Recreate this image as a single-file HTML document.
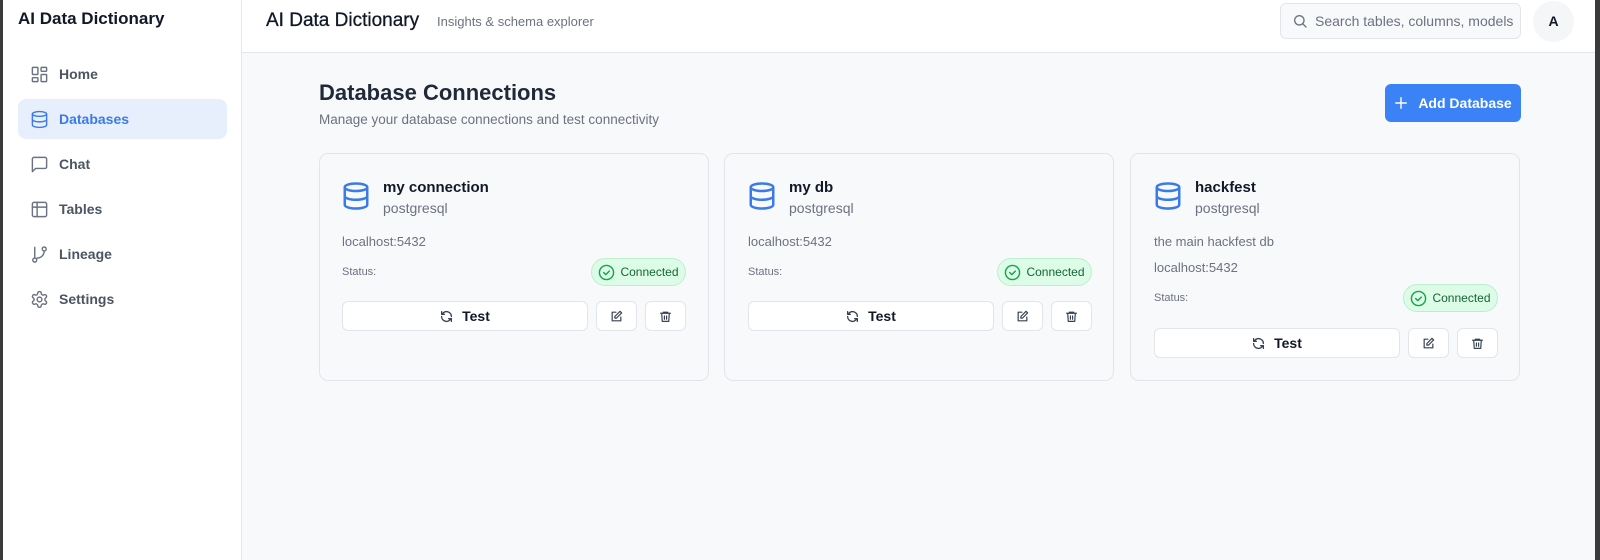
<!DOCTYPE html>
<html><head><meta charset="utf-8"><style>
*{box-sizing:border-box;margin:0;padding:0}
body{width:1600px;height:560px;overflow:hidden;background:#f8f9fb;font-family:"Liberation Sans",sans-serif;position:relative;color:#111827}
.a{position:absolute}
.lb{left:0;top:0;width:3px;height:560px;background:#3a3a3a}
.rb{right:0;top:0;width:5px;height:560px;background:#3a3a3a}
.side{left:3px;top:0;width:239px;height:560px;background:#fff;border-right:1px solid #e5e7eb}
.hdr{left:242px;top:0;width:1353px;height:53px;background:#fff;border-bottom:1px solid #e5e7eb}
.nav{left:18px;width:209px;height:40px;border-radius:8px;display:flex;align-items:center;padding-left:12px;font-size:14px;font-weight:bold;color:#4b5563}
.nav svg{width:19px;height:19px;margin-right:10px;fill:none;stroke:#6b7280;stroke-width:1.8;stroke-linecap:round;stroke-linejoin:round}
.nav.on{background:#e8effc;color:#3b7be8}.nav.on svg{stroke:#3b7be8}
.card{width:390px;height:228px;border:1px solid #e2e5ea;border-radius:9px;background:#f8f9fb}
.t{font-size:13px;color:#6b7280}
.btn{background:#fff;border:1px solid #e2e5ea;border-radius:6px;height:30px;display:flex;align-items:center;justify-content:center;font-size:14px;font-weight:bold;color:#111827}
.badge{background:#dcfce7;border:1px solid #bbf0cc;border-radius:14px;height:28px;display:flex;align-items:center;justify-content:center;font-size:12px;color:#166534}
svg.i{fill:none;stroke-linecap:round;stroke-linejoin:round}
</style></head><body>
<div class="a lb"></div><div class="a rb"></div>
<div class="a side"></div>
<div class="a" style="left:18px;top:9px;font-size:17px;font-weight:bold;color:#111827">AI Data Dictionary</div>

<div class="a nav" style="top:54px"><svg viewBox="0 0 24 24"><rect x="3" y="3" width="7" height="9" rx="1"/><rect x="14" y="3" width="7" height="5" rx="1"/><rect x="14" y="12" width="7" height="9" rx="1"/><rect x="3" y="16" width="7" height="5" rx="1"/></svg>Home</div>
<div class="a nav on" style="top:99px"><svg viewBox="0 0 24 24"><ellipse cx="12" cy="5" rx="9" ry="3"/><path d="M3 5v14a9 3 0 0 0 18 0V5"/><path d="M3 12a9 3 0 0 0 18 0"/></svg>Databases</div>
<div class="a nav" style="top:144px"><svg viewBox="0 0 24 24"><path d="M21 15a2 2 0 0 1-2 2H7l-4 4V5a2 2 0 0 1 2-2h14a2 2 0 0 1 2 2z"/></svg>Chat</div>
<div class="a nav" style="top:189px"><svg viewBox="0 0 24 24"><rect x="3" y="3" width="18" height="18" rx="2"/><path d="M3 9h18M9 3v18"/></svg>Tables</div>
<div class="a nav" style="top:234px"><svg viewBox="0 0 24 24"><circle cx="6" cy="19" r="2.5"/><circle cx="18" cy="5" r="2.5"/><path d="M6 3v13.5M18 7.5a9 9 0 0 1-9 9"/></svg>Lineage</div>
<div class="a nav" style="top:279px"><svg viewBox="0 0 24 24"><circle cx="12" cy="12" r="3"/><path d="M12.2 2h-.4a2 2 0 0 0-2 2v.2a2 2 0 0 1-1 1.7l-.4.3a2 2 0 0 1-2 0l-.2-.1a2 2 0 0 0-2.7.7l-.2.4a2 2 0 0 0 .7 2.7l.2.1a2 2 0 0 1 1 1.7v.5a2 2 0 0 1-1 1.7l-.2.1a2 2 0 0 0-.7 2.7l.2.4a2 2 0 0 0 2.7.7l.2-.1a2 2 0 0 1 2 0l.4.3a2 2 0 0 1 1 1.7v.2a2 2 0 0 0 2 2h.4a2 2 0 0 0 2-2v-.2a2 2 0 0 1 1-1.7l.4-.3a2 2 0 0 1 2 0l.2.1a2 2 0 0 0 2.7-.7l.2-.4a2 2 0 0 0-.7-2.7l-.2-.1a2 2 0 0 1-1-1.7v-.5a2 2 0 0 1 1-1.7l.2-.1a2 2 0 0 0 .7-2.7l-.2-.4a2 2 0 0 0-2.7-.7l-.2.1a2 2 0 0 1-2 0l-.4-.3a2 2 0 0 1-1-1.7V4a2 2 0 0 0-2-2z"/></svg>Settings</div>

<div class="a hdr"></div>
<div class="a" style="left:266px;top:10px;font-size:19px;color:#111827;-webkit-text-stroke:0.3px #111827">AI Data Dictionary</div>
<div class="a" style="left:437px;top:14px;font-size:13px;color:#6b7280">Insights &amp; schema explorer</div>
<div class="a" style="left:1280px;top:3px;width:241px;height:36px;border:1px solid #e2e5ea;border-radius:6px;background:#f8f9fb"></div>
<svg class="a i" style="left:1292px;top:13px" width="16" height="16" viewBox="0 0 24 24" stroke="#6b7280" stroke-width="2"><circle cx="11" cy="11" r="7"/><path d="M21 21l-5-5"/></svg>
<div class="a" style="left:1315px;top:13px;font-size:14px;color:#6b7280">Search tables, columns, models</div>
<div class="a" style="left:1533px;top:1px;width:41px;height:41px;border-radius:50%;background:#f5f6f8;text-align:center;line-height:41px;font-size:14px;font-weight:bold">A</div>

<div class="a" style="left:319px;top:80px;font-size:22px;font-weight:bold;color:#1f2937">Database Connections</div>
<div class="a" style="left:319px;top:112px;font-size:13.5px;color:#6b7280">Manage your database connections and test connectivity</div>
<div class="a" style="left:1385px;top:84px;width:136px;height:38px;border-radius:6px;background:#3b82f6;color:#fff;font-size:14px;font-weight:bold;display:flex;align-items:center;justify-content:center"><svg class="i" width="14" height="14" viewBox="0 0 24 24" stroke="#fff" stroke-width="2.4" style="margin-right:10px"><path d="M12 3v18M3 12h18"/></svg>Add Database</div>

<div class="a card" style="left:319px;top:153px"></div>
<div class="a card" style="left:724px;top:153px"></div>
<div class="a card" style="left:1130px;top:153px"></div>

<svg class="a i" style="left:341px;top:181px" width="30" height="30" viewBox="0 0 24 24" stroke="#3b7be8" stroke-width="2"><ellipse cx="12" cy="5" rx="9" ry="3"/><path d="M3 5v14a9 3 0 0 0 18 0V5"/><path d="M3 12a9 3 0 0 0 18 0"/></svg>
<div class="a" style="left:383px;top:179px;font-size:15px;font-weight:bold">my connection</div>
<div class="a t" style="left:383px;top:200px;font-size:14px">postgresql</div>
<div class="a t" style="left:342px;top:234px">localhost:5432</div>
<div class="a t" style="left:342px;top:266px;font-size:11px">Status:</div>
<div class="a badge" style="left:591px;top:258px;width:95px"><svg class="i" width="17" height="17" viewBox="0 0 24 24" stroke="#16a34a" stroke-width="2" style="margin-right:5px"><circle cx="12" cy="12" r="10"/><path d="M8 12l3 3 5-5"/></svg>Connected</div>
<div class="a btn" style="left:342px;top:301px;width:246px"><svg class="i" width="13" height="13" viewBox="0 0 24 24" stroke="#374151" stroke-width="2.4" style="margin-right:9px"><path d="M21 12a9 9 0 0 0-15.5-6.2L3 8M3 3v5h5M3 12a9 9 0 0 0 15.5 6.2L21 16M21 21v-5h-5"/></svg>Test</div>
<div class="a btn" style="left:596px;top:301px;width:41px"><svg class="i" width="13" height="13" viewBox="0 0 24 24" stroke="#374151" stroke-width="2.2"><path d="M11 4H4v16h16v-7"/><path d="M18.5 2.5l3 3L12 15H9v-3z"/></svg></div>
<div class="a btn" style="left:645px;top:301px;width:41px"><svg class="i" width="13" height="13" viewBox="0 0 24 24" stroke="#374151" stroke-width="2.2"><path d="M3 6h18M8 6V4h8v2M5 6l1 15h12l1-15M10 11v6M14 11v6"/></svg></div>

<svg class="a i" style="left:747px;top:181px" width="30" height="30" viewBox="0 0 24 24" stroke="#3b7be8" stroke-width="2"><ellipse cx="12" cy="5" rx="9" ry="3"/><path d="M3 5v14a9 3 0 0 0 18 0V5"/><path d="M3 12a9 3 0 0 0 18 0"/></svg>
<div class="a" style="left:789px;top:179px;font-size:15px;font-weight:bold">my db</div>
<div class="a t" style="left:789px;top:200px;font-size:14px">postgresql</div>
<div class="a t" style="left:748px;top:234px">localhost:5432</div>
<div class="a t" style="left:748px;top:266px;font-size:11px">Status:</div>
<div class="a badge" style="left:997px;top:258px;width:95px"><svg class="i" width="17" height="17" viewBox="0 0 24 24" stroke="#16a34a" stroke-width="2" style="margin-right:5px"><circle cx="12" cy="12" r="10"/><path d="M8 12l3 3 5-5"/></svg>Connected</div>
<div class="a btn" style="left:748px;top:301px;width:246px"><svg class="i" width="13" height="13" viewBox="0 0 24 24" stroke="#374151" stroke-width="2.4" style="margin-right:9px"><path d="M21 12a9 9 0 0 0-15.5-6.2L3 8M3 3v5h5M3 12a9 9 0 0 0 15.5 6.2L21 16M21 21v-5h-5"/></svg>Test</div>
<div class="a btn" style="left:1002px;top:301px;width:41px"><svg class="i" width="13" height="13" viewBox="0 0 24 24" stroke="#374151" stroke-width="2.2"><path d="M11 4H4v16h16v-7"/><path d="M18.5 2.5l3 3L12 15H9v-3z"/></svg></div>
<div class="a btn" style="left:1051px;top:301px;width:41px"><svg class="i" width="13" height="13" viewBox="0 0 24 24" stroke="#374151" stroke-width="2.2"><path d="M3 6h18M8 6V4h8v2M5 6l1 15h12l1-15M10 11v6M14 11v6"/></svg></div>

<svg class="a i" style="left:1153px;top:181px" width="30" height="30" viewBox="0 0 24 24" stroke="#3b7be8" stroke-width="2"><ellipse cx="12" cy="5" rx="9" ry="3"/><path d="M3 5v14a9 3 0 0 0 18 0V5"/><path d="M3 12a9 3 0 0 0 18 0"/></svg>
<div class="a" style="left:1195px;top:179px;font-size:15px;font-weight:bold">hackfest</div>
<div class="a t" style="left:1195px;top:200px;font-size:14px">postgresql</div>
<div class="a t" style="left:1154px;top:234px">the main hackfest db</div>
<div class="a t" style="left:1154px;top:260px">localhost:5432</div>
<div class="a t" style="left:1154px;top:292px;font-size:11px">Status:</div>
<div class="a badge" style="left:1403px;top:284px;width:95px"><svg class="i" width="17" height="17" viewBox="0 0 24 24" stroke="#16a34a" stroke-width="2" style="margin-right:5px"><circle cx="12" cy="12" r="10"/><path d="M8 12l3 3 5-5"/></svg>Connected</div>
<div class="a btn" style="left:1154px;top:328px;width:246px"><svg class="i" width="13" height="13" viewBox="0 0 24 24" stroke="#374151" stroke-width="2.4" style="margin-right:9px"><path d="M21 12a9 9 0 0 0-15.5-6.2L3 8M3 3v5h5M3 12a9 9 0 0 0 15.5 6.2L21 16M21 21v-5h-5"/></svg>Test</div>
<div class="a btn" style="left:1408px;top:328px;width:41px"><svg class="i" width="13" height="13" viewBox="0 0 24 24" stroke="#374151" stroke-width="2.2"><path d="M11 4H4v16h16v-7"/><path d="M18.5 2.5l3 3L12 15H9v-3z"/></svg></div>
<div class="a btn" style="left:1457px;top:328px;width:41px"><svg class="i" width="13" height="13" viewBox="0 0 24 24" stroke="#374151" stroke-width="2.2"><path d="M3 6h18M8 6V4h8v2M5 6l1 15h12l1-15M10 11v6M14 11v6"/></svg></div>
</body></html>
